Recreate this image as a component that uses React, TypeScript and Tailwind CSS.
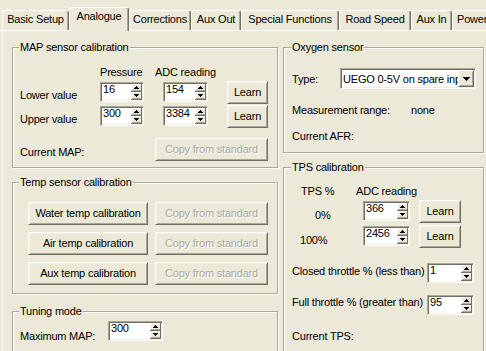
import React from "react";

const sunken =
  "border border-t-[#ACA899] border-l-[#ACA899] border-r-white border-b-white shadow-[inset_1px_1px_0_#716F64,inset_-1px_-1px_0_#F1EFE2] bg-white p-[1px]";
const raised =
  "border border-t-white border-l-white border-r-[#716F64] border-b-[#716F64] shadow-[inset_1px_1px_0_#F1EFE2,inset_-1px_-1px_0_#ACA899] bg-[#ECE9D8]";

function Spinner() {
  return (
    <svg width="11" height="16" viewBox="0 0 11 16" shapeRendering="crispEdges" className="block shrink-0">
      <rect x="0" y="0" width="11" height="16" fill="#ECE9D8" />
      <rect x="0" y="0" width="11" height="1" fill="#fff" />
      <rect x="0" y="0" width="1" height="8" fill="#fff" />
      <rect x="10" y="0" width="1" height="8" fill="#716F64" />
      <rect x="0" y="7" width="11" height="1" fill="#716F64" />
      <rect x="1" y="6" width="9" height="1" fill="#ACA899" />
      <rect x="0" y="8" width="11" height="1" fill="#fff" />
      <rect x="0" y="8" width="1" height="8" fill="#fff" />
      <rect x="10" y="8" width="1" height="8" fill="#716F64" />
      <rect x="0" y="15" width="11" height="1" fill="#716F64" />
      <rect x="1" y="14" width="9" height="1" fill="#ACA899" />
      <rect x="5" y="2" width="1" height="1" fill="#000" />
      <rect x="4" y="3" width="3" height="1" fill="#000" />
      <rect x="3" y="4" width="5" height="1" fill="#000" />
      <rect x="3" y="10" width="5" height="1" fill="#000" />
      <rect x="4" y="11" width="3" height="1" fill="#000" />
      <rect x="5" y="12" width="1" height="1" fill="#000" />
    </svg>
  );
}

function SpinBox({ value, w, className = "" }: { value: string; w: string; className?: string }) {
  return (
    <div className={`${sunken} ${w} h-[20px] flex shrink-0 ${className}`}>
      <div className="flex-1 pl-[1px] leading-[11px] overflow-hidden whitespace-nowrap">{value}</div>
      <Spinner />
    </div>
  );
}

function Btn({
  children,
  w,
  disabled = false,
  className = "",
}: {
  children: React.ReactNode;
  w: string;
  disabled?: boolean;
  className?: string;
}) {
  return (
    <div
      className={`${raised} ${w} h-[23px] shrink-0 flex items-center justify-center whitespace-nowrap ${
        disabled ? "text-[#ACA899] [text-shadow:1px_1px_0_#fff]" : ""
      } ${className}`}
    >
      {children}
    </div>
  );
}

function Group({
  title,
  className = "",
  legendMl = "ml-[6px]",
  children,
}: {
  title: string;
  className?: string;
  legendMl?: string;
  children: React.ReactNode;
}) {
  return (
    <fieldset className={`border border-[#ACA899] shadow-[inset_1px_1px_0_#fff,1px_1px_0_#fff] ${className}`}>
      <legend className={`${legendMl} px-[1px] bg-[#ECE9D8] leading-[13px]`}>{title}</legend>
      {children}
    </fieldset>
  );
}

function Combo() {
  return (
    <div className={`${sunken} w-[136px] h-[21px] flex shrink-0`}>
      <div className="flex-1 pl-[1px] pt-[3px] overflow-hidden whitespace-nowrap leading-[13px]">
        UEGO 0-5V on spare input
      </div>
      <div className={`${raised} w-[16px] h-full flex items-center justify-center shrink-0`}>
        <svg width="7" height="4" viewBox="0 0 7 4" shapeRendering="crispEdges" className="block">
          <rect x="0" y="0" width="7" height="1" fill="#000" />
          <rect x="1" y="1" width="5" height="1" fill="#000" />
          <rect x="2" y="2" width="3" height="1" fill="#000" />
          <rect x="3" y="3" width="1" height="1" fill="#000" />
        </svg>
      </div>
    </div>
  );
}

const tabs: { label: string; w: string; selected?: boolean; left?: boolean }[] = [
  { label: "Basic Setup", w: "w-[67px]" },
  { label: "Analogue", w: "w-[60px]", selected: true },
  { label: "Corrections", w: "w-[62px]" },
  { label: "Aux Out", w: "w-[50px]" },
  { label: "Special Functions", w: "w-[98px]" },
  { label: "Road Speed", w: "w-[72px]" },
  { label: "Aux In", w: "w-[41px]" },
  { label: "Power", w: "w-[70px]", left: true },
];

export default function App() {
  return (
    <div className="w-[486px] h-[351px] overflow-hidden bg-[#ECE9D8] text-black font-['Liberation_Sans',Arial,sans-serif] text-[11px] leading-[13px] tracking-[-0.2px]">
      {/* Tab strip */}
      <div className="flex items-end h-[31px] pl-[2px] border-b border-white">
        {tabs.map((t) =>
          t.selected ? (
            <div
              key={t.label}
              className={`${t.w} shrink-0 h-[24px] mb-[-1px] relative z-10 bg-[#ECE9D8] border-t border-l border-r border-t-white border-l-white border-r-[#716F64] rounded-t-[3px] shadow-[inset_-1px_0_0_#ACA899] flex justify-center pt-[2px] whitespace-nowrap`}
            >
              {t.label}
            </div>
          ) : (
            <div
              key={t.label}
              className={`${t.w} shrink-0 h-[20px] border-t border-l border-r border-t-white border-l-white border-r-[#716F64] rounded-t-[3px] shadow-[inset_-1px_0_0_#ACA899] flex ${
                t.left ? "justify-start pl-[4px]" : "justify-center"
              } pt-[2px] whitespace-nowrap`}
            >
              {t.label}
            </div>
          )
        )}
      </div>

      {/* Panel */}
      <div className="ml-[2px] border-l border-white flex h-[320px]">
        {/* Left column */}
        <div className="ml-[9px] w-[266px] shrink-0 flex flex-col">
          <Group title="MAP sensor calibration" className="mt-[10px] pb-[6px]">
            <div className="mt-[12px] flex">
              <div className="w-[87px] shrink-0" />
              <div className="w-[44px] shrink-0 whitespace-nowrap">Pressure</div>
              <div className="ml-[19px] w-[45px] shrink-0 flex justify-center whitespace-nowrap">ADC reading</div>
            </div>
            <div className="mt-[2px] flex flex-col gap-[1px]">
              <div className="flex h-[23px]">
                <div className="w-[87px] shrink-0 pl-[7px] pt-[8px] whitespace-nowrap">Lower value</div>
                <SpinBox value="16" w="w-[44px]" className="mt-[1px]" />
                <SpinBox value="154" w="w-[45px]" className="mt-[1px] ml-[19px]" />
                <Btn w="w-[41px]" className="ml-[19px]">
                  Learn
                </Btn>
              </div>
              <div className="flex h-[23px]">
                <div className="w-[87px] shrink-0 pl-[7px] pt-[8px] whitespace-nowrap">Upper value</div>
                <SpinBox value="300" w="w-[44px]" className="mt-[1px]" />
                <SpinBox value="3384" w="w-[45px]" className="mt-[1px] ml-[19px]" />
                <Btn w="w-[41px]" className="ml-[19px]">
                  Learn
                </Btn>
              </div>
            </div>
            <div className="mt-[10px] flex">
              <div className="w-[142px] shrink-0 pl-[7px] pt-[8px] whitespace-nowrap">Current MAP:</div>
              <Btn w="w-[113px]" disabled>
                Copy from standard
              </Btn>
            </div>
          </Group>

          <Group title="Temp sensor calibration" className="mt-[8px] pb-[8px]">
            <div className="mt-[13px] pl-[15px] flex flex-col gap-[7px]">
              {["Water temp calibration", "Air temp calibration", "Aux temp calibration"].map((t) => (
                <div key={t} className="flex gap-[7px]">
                  <Btn w="w-[120px]">{t}</Btn>
                  <Btn w="w-[113px]" disabled>
                    Copy from standard
                  </Btn>
                </div>
              ))}
            </div>
          </Group>

          <Group title="Tuning mode" className="mt-[11px] pb-[20px]">
            <div className="mt-[3px] flex">
              <div className="w-[95px] shrink-0 pl-[7px] pt-[9px] whitespace-nowrap">Maximum MAP:</div>
              <SpinBox value="300" w="w-[55px]" />
            </div>
          </Group>
        </div>

        {/* Right column */}
        <div className="ml-[5px] w-[201px] shrink-0 flex flex-col">
          <Group title="Oxygen sensor" legendMl="ml-[7px]" className="mt-[10px] pb-[9px]">
            <div className="mt-[14px] flex">
              <div className="w-[56px] shrink-0 pl-[8px] pt-[5px]">Type:</div>
              <Combo />
            </div>
            <div className="mt-[15px] flex pl-[8px]">
              <div className="w-[119px] shrink-0 whitespace-nowrap">Measurement range:</div>
              <div>none</div>
            </div>
            <div className="mt-[13px] pl-[8px]">Current AFR:</div>
          </Group>

          <Group title="TPS calibration" legendMl="ml-[7px]" className="mt-[8px] pb-[20px]">
            <div className="mt-[11px] flex">
              <div className="w-[79px] shrink-0 pl-[17px] whitespace-nowrap">TPS %</div>
              <div className="w-[47px] shrink-0 flex justify-center whitespace-nowrap">ADC reading</div>
            </div>
            <div className="mt-[2px] flex flex-col gap-[2px]">
              <div className="flex h-[23px]">
                <div className="w-[79px] shrink-0 pl-[31px] pt-[9px]">0%</div>
                <SpinBox value="366" w="w-[47px]" className="mt-[1px]" />
                <Btn w="w-[42px]" className="ml-[9px]">
                  Learn
                </Btn>
              </div>
              <div className="flex h-[23px]">
                <div className="w-[79px] shrink-0 pl-[16px] pt-[9px]">100%</div>
                <SpinBox value="2456" w="w-[47px]" className="mt-[1px]" />
                <Btn w="w-[42px]" className="ml-[9px]">
                  Learn
                </Btn>
              </div>
            </div>
            <div className="mt-[15px] flex">
              <div className="w-[143px] shrink-0 pl-[8px] pt-[2px] whitespace-nowrap">Closed throttle % (less than)</div>
              <SpinBox value="1" w="w-[47px]" />
            </div>
            <div className="mt-[12px] flex">
              <div className="w-[143px] shrink-0 pl-[8px] pt-[1px] whitespace-nowrap">Full throttle % (greater than)</div>
              <SpinBox value="95" w="w-[47px]" />
            </div>
            <div className="mt-[15px] pl-[8px]">Current TPS:</div>
          </Group>
        </div>
      </div>
    </div>
  );
}
